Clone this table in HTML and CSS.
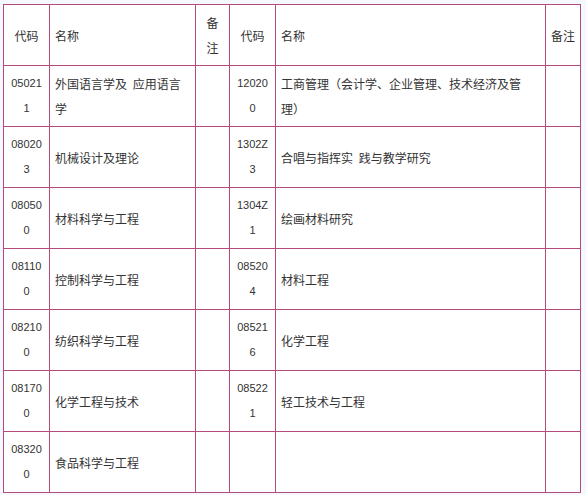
FILE: index.html
```
<!DOCTYPE html>
<html lang="zh">
<head>
<meta charset="utf-8">
<link rel="stylesheet" href="styles.css">
</head>
<body>
<table class="grid">
  <colgroup>
    <col class="c-code"><col class="c-name"><col class="c-note"><col class="c-code"><col class="c-name2"><col class="c-note2">
  </colgroup>
  <tr>
    <td class="code">代码</td><td class="name">名称</td><td class="note">备注</td>
    <td class="code">代码</td><td class="name">名称</td><td class="note note2">备注</td>
  </tr>
  <tr>
    <td class="code num">050211</td><td class="name">外国语言学及 应用语言学</td><td class="note"></td>
    <td class="code num">120200</td><td class="name">工商管理（会计学、企业管理、技术经济及管理）</td><td class="note"></td>
  </tr>
  <tr>
    <td class="code num">080203</td><td class="name">机械设计及理论</td><td class="note"></td>
    <td class="code num">1302Z3</td><td class="name">合唱与指挥实 践与教学研究</td><td class="note"></td>
  </tr>
  <tr>
    <td class="code num">080500</td><td class="name">材料科学与工程</td><td class="note"></td>
    <td class="code num">1304Z1</td><td class="name">绘画材料研究</td><td class="note"></td>
  </tr>
  <tr>
    <td class="code num">081100</td><td class="name">控制科学与工程</td><td class="note"></td>
    <td class="code num">085204</td><td class="name">材料工程</td><td class="note"></td>
  </tr>
  <tr>
    <td class="code num">082100</td><td class="name">纺织科学与工程</td><td class="note"></td>
    <td class="code num">085216</td><td class="name">化学工程</td><td class="note"></td>
  </tr>
  <tr>
    <td class="code num">081700</td><td class="name">化学工程与技术</td><td class="note"></td>
    <td class="code num">085221</td><td class="name">轻工技术与工程</td><td class="note"></td>
  </tr>
  <tr>
    <td class="code num">083200</td><td class="name">食品科学与工程</td><td class="note"></td>
    <td class="code num"></td><td class="name"></td><td class="note"></td>
  </tr>
</table>
</body>
</html>
```
FILE: styles.css
```
html, body {
  margin: 0;
  background: #f5f8fd;
}
body {
  padding: 4px 0 0 3px;
  font-family: "Noto Sans CJK SC", "Liberation Sans", sans-serif;
  font-size: 12px;
  color: #333;
}
.grid {
  border-collapse: collapse;
  table-layout: fixed;
  width: 578px;
  background: #fff;
  text-spacing-trim: space-all;
}
.c-code { width: 46px; }
.c-name { width: 146px; }
.c-note { width: 34px; }
.c-name2 { width: 270px; }
.c-note2 { width: 35px; }
.grid tr { height: 61px; }
.grid td {
  border: 1px solid #b64a7b;
  padding: 0 5px;
  line-height: 25px;
  vertical-align: middle;
  word-break: break-all;
}
.grid td.code, .grid td.note {
  text-align: center;
}
.grid td.note2 { padding: 0 4px; }
.grid td.name {
  text-align: left;
  padding: 0 5px;
  word-spacing: 3px;
}
.grid td.num {
  font-family: "Liberation Sans", sans-serif;
  font-size: 11px;
}
```
